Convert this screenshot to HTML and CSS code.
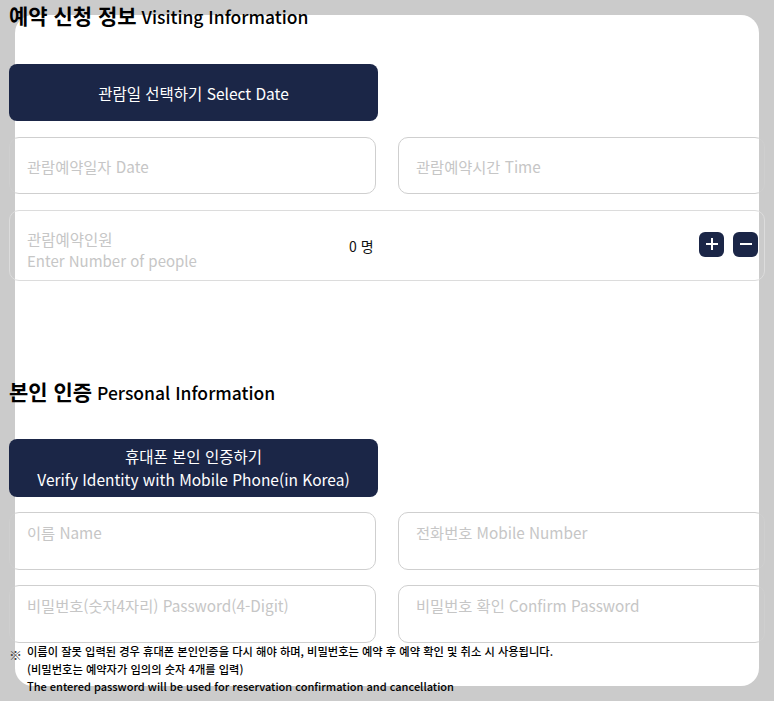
FILE: index.html
```html
<!DOCTYPE html>
<html lang="ko">
<head>
<meta charset="utf-8">
<title>예약 신청 정보</title>
<link rel="stylesheet" href="styles.css">
</head>
<body>
<main class="sheet">
  <div class="form">
    <h2 class="section-title"><span class="ko">예약 신청 정보</span> Visiting Information</h2>
    <button class="primary-btn primary-btn--date" type="button">관람일 선택하기 Select Date</button>

    <div class="field-row field-row--centered">
      <div class="field"><span class="field-text">관람예약일자 Date</span></div>
      <div class="field"><span class="field-text">관람예약시간 Time</span></div>
    </div>

    <div class="field people">
      <div class="people-label">
        <div class="people-ko">관람예약인원</div>
        <div class="people-en">Enter Number of people</div>
      </div>
      <div class="people-count">0 명</div>
      <div class="stepper">
        <button class="step-btn" type="button" aria-label="plus">
          <svg width="14" height="14" viewBox="0 0 14 14"><path d="M7 1v12M1 7h12" stroke="#fff" stroke-width="2" fill="none"/></svg>
        </button>
        <button class="step-btn" type="button" aria-label="minus">
          <svg width="14" height="14" viewBox="0 0 14 14"><path d="M1 7h12" stroke="#fff" stroke-width="2" fill="none"/></svg>
        </button>
      </div>
    </div>

    <h2 class="section-title section-title--personal"><span class="ko">본인 인증</span> Personal Information</h2>
    <button class="primary-btn primary-btn--verify" type="button">휴대폰 본인 인증하기<br>Verify Identity with Mobile Phone(in Korea)</button>

    <div class="field-row field-row--top">
      <div class="field"><span class="field-text">이름 Name</span></div>
      <div class="field"><span class="field-text">전화번호 Mobile Number</span></div>
    </div>
    <div class="field-row field-row--top">
      <div class="field"><span class="field-text">비밀번호(숫자4자리) Password(4-Digit)</span></div>
      <div class="field"><span class="field-text">비밀번호 확인 Confirm Password</span></div>
    </div>

    <div class="notice">
      <span class="notice-mark">※</span>
      <div class="notice-text">
        <p class="notice-ko">이름이 잘못 입력된 경우 휴대폰 본인인증을 다시 해야 하며, 비밀번호는 예약 후 예약 확인 및 취소 시 사용됩니다.</p>
        <p class="notice-ko">(비밀번호는 예약자가 임의의 숫자 4개를 입력)</p>
        <p class="notice-en">The entered password will be used for reservation confirmation and cancellation</p>
      </div>
    </div>
  </div>
</main>
</body>
</html>
```

FILE: styles.css
```css
* {
  box-sizing: border-box;
}

html, body {
  margin: 0;
  padding: 0;
}

body {
  background: #cbcbcb;
  font-family: "Noto Sans CJK KR", "Noto Sans", sans-serif;
  color: #111;
}

.sheet {
  margin: 15px;
  width: 744px;
  height: 671px;
  background: #fff;
  border-radius: 18px;
}

.form {
  width: 756px;
  margin: 0 0 0 -6px;
  transform: translateY(-15px);
  display: flex;
  flex-direction: column;
}

.section-title {
  margin: 0;
  height: 34px;
  line-height: 30px;
  font-size: 17.5px;
  font-weight: 500;
  color: #000;
  white-space: nowrap;
}

.section-title .ko {
  font-size: 21px;
  font-weight: 700;
}

.section-title--personal {
  margin-top: 95px;
}

.primary-btn {
  display: block;
  width: 369px;
  border: 0;
  border-radius: 8px;
  background: #1b2647;
  color: #fff;
  font-family: inherit;
  font-size: 15.5px;
  padding: 0;
  text-align: center;
}

.primary-btn--date {
  margin-top: 30px;
  height: 57px;
  padding-top: 1px;
}

.primary-btn--verify {
  margin-top: 29px;
  height: 58px;
  line-height: 23px;
}

.field-row {
  display: grid;
  grid-template-columns: 1fr 1fr;
  column-gap: 22px;
}

.field-row--centered {
  margin-top: 16px;
}

.field-row--top {
  margin-top: 15px;
}

.field {
  border: 1px solid #cfcfcf;
  border-radius: 10px;
  padding: 0 17px;
  color: #c6c6c6;
  font-size: 15.3px;
  line-height: 22px;
  white-space: nowrap;
}

.field-row--centered .field {
  height: 57px;
  display: flex;
  align-items: center;
}

.field-row--top .field {
  height: 58px;
  padding-top: 8px;
}

.people {
  margin-top: 16px;
  height: 71px;
  display: flex;
  align-items: center;
  border-color: #dcdcdc;
  padding-right: 6px;
}

.people-label {
  flex: 0 0 322px;
  align-self: flex-start;
  padding-top: 17px;
}

.people-ko {
  font-size: 15.5px;
}

.people-en {
  font-size: 15px;
}

.people-count {
  flex: 1;
  color: #111;
  font-size: 14px;
}

.stepper {
  display: flex;
  gap: 9px;
  margin-top: -3px;
}

.step-btn {
  width: 25px;
  height: 25px;
  border: 0;
  border-radius: 6px;
  background: #1b2647;
  padding: 0;
  display: flex;
  align-items: center;
  justify-content: center;
}

.notice {
  display: flex;
  line-height: 17.5px;
}

.notice-mark {
  width: 18px;
  flex: 0 0 18px;
  font-size: 13px;
  color: #444;
  padding-top: 3px;
}

.notice-text p {
  margin: 0;
  color: #000;
  font-weight: 500;
  white-space: nowrap;
}

.notice-ko {
  font-size: 11.25px;
}

.notice-en {
  font-size: 11px;
}
```
